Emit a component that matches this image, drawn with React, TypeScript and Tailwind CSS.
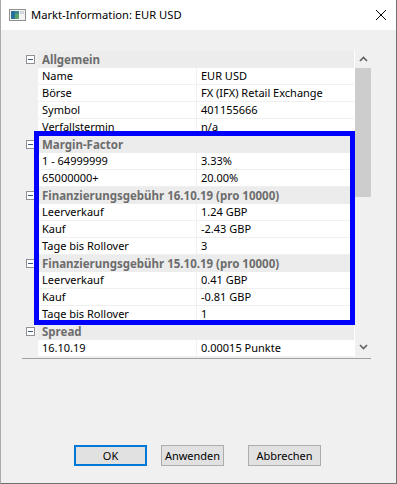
import React from "react";

type Row = { type: "h"; label: string } | { type: "r"; name: string; value: string };

const rows: Row[] = [
  { type: "h", label: "Allgemein" },
  { type: "r", name: "Name", value: "EUR USD" },
  { type: "r", name: "Börse", value: "FX (IFX) Retail Exchange" },
  { type: "r", name: "Symbol", value: "401155666" },
  { type: "r", name: "Verfallstermin", value: "n/a" },
  { type: "h", label: "Margin-Factor" },
  { type: "r", name: "1 - 64999999", value: "3.33%" },
  { type: "r", name: "65000000+", value: "20.00%" },
  { type: "h", label: "Finanzierungsgebühr 16.10.19 (pro 10000)" },
  { type: "r", name: "Leerverkauf", value: "1.24 GBP" },
  { type: "r", name: "Kauf", value: "-2.43 GBP" },
  { type: "r", name: "Tage bis Rollover", value: "3" },
  { type: "h", label: "Finanzierungsgebühr 15.10.19 (pro 10000)" },
  { type: "r", name: "Leerverkauf", value: "0.41 GBP" },
  { type: "r", name: "Kauf", value: "-0.81 GBP" },
  { type: "r", name: "Tage bis Rollover", value: "1" },
  { type: "h", label: "Spread" },
  { type: "r", name: "16.10.19", value: "0.00015 Punkte" },
];

const font = { fontFamily: '"Segoe UI", "Noto Sans", sans-serif' };

function MinusBox() {
  return (
    <div className="w-[9px] h-[9px] border border-[#919191] bg-white flex items-center justify-center">
      <div className="w-[5px] h-[1px] bg-[#3d5a87]" />
    </div>
  );
}

export default function App() {
  return (
    <div
      className="w-[397px] h-[484px] bg-[#f0f0f0] border-l border-r border-b border-l-[#aaaaaa] border-r-[#6f6f6f] border-b-[#6f6f6f] flex flex-col relative text-[11px] text-black overflow-hidden"
      style={font}
    >
      {/* Title bar */}
      <div className="h-[30px] bg-white flex items-center shrink-0">
        <svg width="17" height="12" viewBox="0 0 17 12" className="ml-[8px]">
          <rect x="0.5" y="0.5" width="16" height="11" fill="#f4f4f4" stroke="#8f8f8f" />
          <rect x="2" y="2" width="8" height="8" fill="#3f8a8c" />
          <rect x="2" y="2" width="4" height="8" fill="#2a6f9a" />
          <rect x="6" y="5" width="4" height="5" fill="#5aa36a" />
          <rect x="11" y="2" width="4" height="3" fill="#cfd6dd" />
        </svg>
        <span className="ml-[5px] text-[11.2px] leading-none text-black">Markt-Information: EUR USD</span>
        <svg width="12" height="12" viewBox="0 0 12 12" className="ml-auto mr-[9px]">
          <path d="M1 1 L11 11 M11 1 L1 11" stroke="#000" strokeWidth="1" />
        </svg>
      </div>

      {/* Body */}
      <div className="flex-1 flex flex-col pt-[20px] pl-[21px]">
        <div className="w-[349px] h-[309px] flex border-b border-[#a0a0a0]">
          {/* grid content */}
          <div className="w-[332px] pt-[1px] flex flex-col">
            {rows.map((r, i) =>
              r.type === "h" ? (
                <div key={i} className="h-[17px] flex items-center">
                  <div className="w-[16px] flex justify-center items-center">
                    <MinusBox />
                  </div>
                  <div className="flex-1 h-full bg-[#ececec] flex items-center pl-[4px] font-bold text-[11.5px] text-[#6d6d6d] whitespace-nowrap">
                    {r.label}
                  </div>
                </div>
              ) : (
                <div key={i} className="h-[17px] flex pb-[1px]">
                  <div className="w-[16px]" />
                  <div className="w-[158px] bg-white flex items-center pl-[4px] whitespace-nowrap overflow-hidden">
                    {r.name}
                  </div>
                  <div className="w-[1px]" />
                  <div className="flex-1 bg-white flex items-center pl-[4px] whitespace-nowrap overflow-hidden">
                    {r.value}
                  </div>
                </div>
              )
            )}
          </div>
          {/* scrollbar */}
          <div className="w-[17px] flex flex-col border-l border-white">
            <div className="h-[18px] flex items-center justify-center">
              <svg width="9" height="6" viewBox="0 0 9 6">
                <path d="M1 5 L4.5 1.5 L8 5" stroke="#606060" strokeWidth="1.6" fill="none" />
              </svg>
            </div>
            <div className="h-[129px] bg-[#cdcdcd]" />
            <div className="flex-1" />
            <div className="h-[22px] flex items-center justify-center">
              <svg width="9" height="6" viewBox="0 0 9 6">
                <path d="M1 1 L4.5 4.5 L8 1" stroke="#606060" strokeWidth="1.6" fill="none" />
              </svg>
            </div>
          </div>
        </div>

        {/* Buttons */}
        <div className="mt-[86px] flex gap-[14px] pl-[52px]">
          <button className="w-[73px] h-[21px] bg-[#e1e1e1] border-2 border-[#0078d7] text-[11px] leading-none">
            OK
          </button>
          <button className="w-[63px] h-[21px] bg-[#e1e1e1] border border-[#adadad] text-[11px] leading-none">
            Anwenden
          </button>
          <button className="w-[73px] h-[21px] bg-[#e1e1e1] border border-[#adadad] text-[11px] leading-none ml-[10px]">
            Abbrechen
          </button>
        </div>
      </div>

      {/* Annotation overlay */}
      <div className="absolute left-[33px] top-[131px] w-[321px] h-[194px] border-[5px] border-[#0000ff] pointer-events-none" />
    </div>
  );
}
